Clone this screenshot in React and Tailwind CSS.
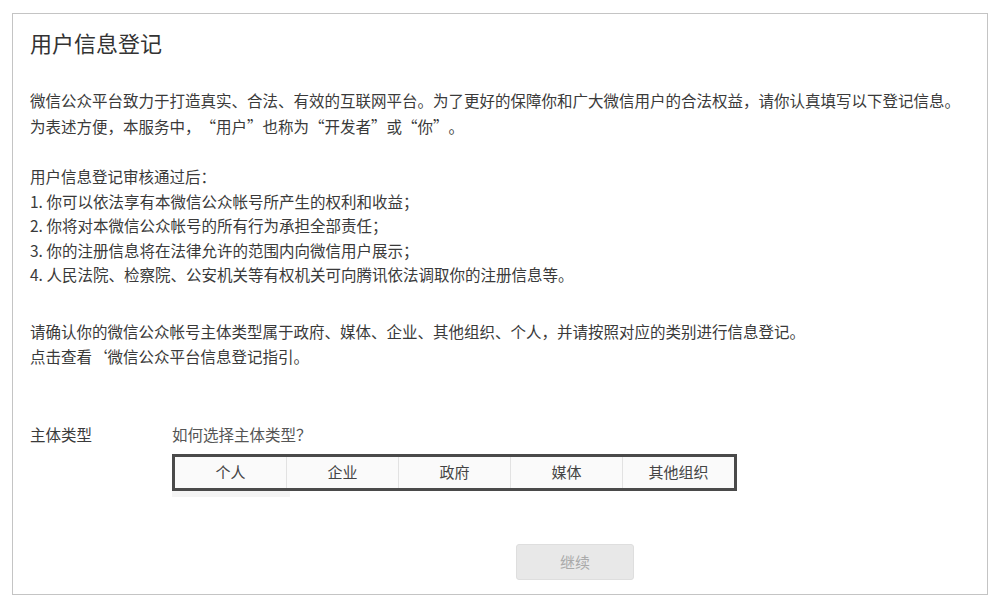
import React from "react";

const types = ["个人", "企业", "政府", "媒体", "其他组织"];

const rights = [
  "1. 你可以依法享有本微信公众帐号所产生的权利和收益；",
  "2. 你将对本微信公众帐号的所有行为承担全部责任；",
  "3. 你的注册信息将在法律允许的范围内向微信用户展示；",
  "4. 人民法院、检察院、公安机关等有权机关可向腾讯依法调取你的注册信息等。",
];

export default function App() {
  return (
    <div
      className="w-[1000px] h-[606px] bg-white pt-[13px] pl-[12px] text-[#3a3a3a] [text-spacing-trim:space-all]"
      style={{ fontFamily: '"Noto Sans CJK SC", "Noto Sans", sans-serif' }}
    >
      <div className="w-[976px] h-[582px] border border-[#c4c4c4] pl-[17px] pt-[13px] flex flex-col">
        <h1 className="text-[22px] leading-[30px] text-[#333]">用户信息登记</h1>

        <div className="mt-[30px] text-[15.5px] leading-[26px]">
          <p>微信公众平台致力于打造真实、合法、有效的互联网平台。为了更好的保障你和广大微信用户的合法权益，请你认真填写以下登记信息。</p>
          <p>为表述方便，本服务中，“用户”也称为“开发者”或“你”。</p>
        </div>

        <div className="mt-[25px] text-[15.5px] leading-[24.5px]">
          <p>用户信息登记审核通过后：</p>
          {rights.map((r) => (
            <p key={r}>{r}</p>
          ))}
        </div>

        <div className="mt-[32px] text-[15.5px] leading-[25.5px]">
          <p>请确认你的微信公众帐号主体类型属于政府、媒体、企业、其他组织、个人，并请按照对应的类别进行信息登记。</p>
          <p>点击查看‘微信公众平台信息登记指引。</p>
        </div>

        <div className="mt-[52px] flex text-[15.5px] leading-[25px]">
          <span className="w-[142px]">主体类型</span>
          <span className="text-[#555]">如何选择主体类型？</span>
        </div>

        <div className="ml-[142px] mt-[7px] w-[565px]">
          <div className="flex h-[37px] border-[3px] border-[#4a4a4a] bg-[#fafafa]">
            {types.map((t, i) => (
              <div
                key={t}
                className={`flex-1 flex items-center justify-center text-[15px] text-[#444] ${
                  i > 0 ? "border-l border-[#e2e2e2]" : ""
                }`}
              >
                {t}
              </div>
            ))}
          </div>
          <div className="w-[118px] h-[6px] bg-[#f4f4f4]" />
        </div>

        <div className="mt-auto mb-[14px] ml-[486px]">
          <button className="w-[118px] h-[36px] rounded-[3px] bg-[#e8e8e8] border border-[#dedede] text-[15px] text-[#aaa]">
            继续
          </button>
        </div>
      </div>
    </div>
  );
}
